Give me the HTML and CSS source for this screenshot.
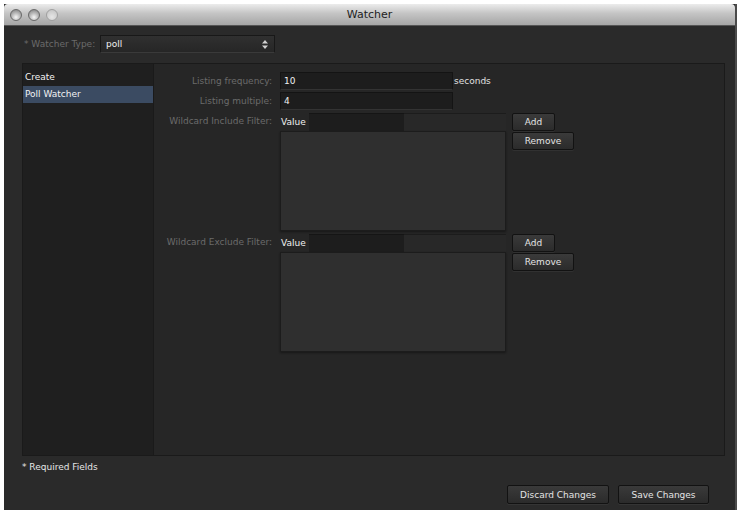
FILE: index.html
```html
<!DOCTYPE html>
<html>
<head>
<meta charset="utf-8">
<link rel="stylesheet" href="styles.css">
</head>
<body>
<div class="window">
  <div class="titlebar">
    <div class="lights"><span class="light"></span><span class="light"></span><span class="light off"></span></div>
    <div class="title">Watcher</div>
  </div>
  <div class="content">
    <div class="typerow">
      <span class="dim">* Watcher Type:</span>
      <div class="select"><span>poll</span><svg class="arrows" width="6" height="9" viewBox="0 0 6 9"><path d="M3 0 L6 3.5 H0 Z M3 9 L6 5.5 H0 Z" fill="#d0d0d0"/></svg></div>
    </div>
    <div class="panel">
      <div class="sidebar">
        <div class="item">Create</div>
        <div class="item selected">Poll Watcher</div>
      </div>
      <div class="main">
        <div class="form">
          <div class="lbl">Listing frequency:</div>
          <div class="ctl"><div class="input">10</div><span class="unit">seconds</span></div>
          <div></div>
          <div class="lbl">Listing multiple:</div>
          <div class="ctl"><div class="input">4</div></div>
          <div></div>

          <div class="lbl">Wildcard Include Filter:</div>
          <div class="valrow"><span class="vl">Value</span><div class="vinput"></div><div class="vstrip"></div></div>
          <div><button class="btn add">Add</button></div>
          <div></div>
          <div class="listbox"></div>
          <div><button class="btn rem">Remove</button></div>

          <div class="lbl">Wildcard Exclude Filter:</div>
          <div class="valrow"><span class="vl">Value</span><div class="vinput"></div><div class="vstrip"></div></div>
          <div><button class="btn add">Add</button></div>
          <div></div>
          <div class="listbox"></div>
          <div><button class="btn rem">Remove</button></div>
        </div>
      </div>
    </div>
    <div class="req">* Required Fields</div>
    <div class="actions">
      <button class="btn big discard">Discard Changes</button>
      <button class="btn big save">Save Changes</button>
    </div>
  </div>
</div>
</body>
</html>
```

FILE: styles.css
```css
html, body { margin: 0; padding: 0; background: #ffffff; }
body { font-family: "DejaVu Sans", sans-serif; font-size: 9px; color: #e2e2e2; }

.window {
  margin: 4px 0 0 4px;
  width: 733px;
  height: 506px;
  background: #2a2a2a;
  border-right: 2px solid #4a4a4a;
  box-sizing: border-box;
  display: flex;
  flex-direction: column;
}
.titlebar {
  height: 21px;
  flex: none;
  background: linear-gradient(#ececec, #c4c4c4 45%, #a6a6a6);
  border-bottom: 1px solid #555;
  display: flex;
  align-items: center;
  position: relative;
  border-radius: 4px 4px 0 0;
}
.lights { display: flex; gap: 6px; padding-left: 6px; position: relative; z-index: 1; }
.light {
  width: 12px; height: 12px; border-radius: 50%;
  background: radial-gradient(circle at 50% 72%, #f6f6f6 0, #c2c2c2 40%, #7a7a7a 100%);
  border: 1px solid #6a6a6a;
  box-sizing: border-box;
}
.light.off { border-color: #a0a0a0; background: radial-gradient(circle at 50% 70%, #e6e6e6, #c0c0c0); }
.title {
  position: absolute; left: 0; right: 0; text-align: center;
  font-size: 11px; color: #1e1e1e; top: 4px;
}

.content { flex: 1; display: flex; flex-direction: column; padding: 0 8px 0 18px; }
.typerow { display: flex; align-items: center; height: 18px; margin-top: 9px; }
.dim { color: #6a6a6a; }
.typerow .dim { width: 76px; padding-left: 2px; }
.select {
  width: 175px; height: 18px; box-sizing: border-box;
  background: linear-gradient(#303030, #262626);
  border: 1px solid #181818;
  border-bottom-color: #3a3a3a;
  display: flex; align-items: center; justify-content: space-between;
  padding: 0 6px 0 5px; color: #f0f0f0;
}
.arrows { display: block; }

.panel {
  margin-top: 10px;
  height: 391px;
  border: 1px solid #1a1a1a;
  display: flex;
  margin-right: 2px;
}
.sidebar { width: 131px; background: #1f1f1f; border-right: 1px solid #1a1a1a; padding-top: 5px; box-sizing: border-box; }
.item { height: 17px; line-height: 17px; padding-left: 2px; color: #f2f2f2; }
.selected { background: #3b4b62; }
.main { flex: 1; background: #262626; padding: 8px 0 0 0; }

.form {
  display: grid;
  grid-template-columns: 120px 226px auto;
  column-gap: 6px;
  row-gap: 2px;
  align-items: start;
}
.lbl { text-align: right; color: #6b6b6b; height: 18px; line-height: 18px; padding-right: 2px; }
.ctl { display: flex; align-items: center; }
.input {
  width: 173px; height: 18px; box-sizing: border-box; line-height: 17px;
  background: #1d1d1d; border: 1px solid #141414; border-bottom-color: #333;
  padding-left: 3px; color: #f0f0f0;
}
.unit { margin-left: 1px; color: #e0e0e0; }
.valrow { display: flex; height: 18px; align-items: stretch; margin-top: 1px; }
.vl { width: 28px; line-height: 18px; color: #f0f0f0; padding-left: 1px; }
.vinput { width: 95px; background: #1d1d1d; border-top: 1px solid #151515; }
.vstrip { flex: 1; background: #282828; border-top: 1px solid #1c1c1c; }
.listbox {
  width: 226px; height: 100px; box-sizing: border-box;
  background: #2f2f2f; border: 1px solid #1c1c1c;
  margin-top: -2px;
  box-shadow: 0 1px 2px rgba(0,0,0,.4);
}
.btn {
  font-family: "DejaVu Sans", sans-serif; font-size: 9px; color: #e4e4e4;
  background: linear-gradient(#3a3a3a, #2b2b2b);
  border: 1px solid #121212; border-radius: 2px;
  padding: 0; margin: 0;
  box-shadow: 0 1px 0 rgba(255,255,255,.05);
}
.add { width: 43px; height: 18px; margin-top: 1px; }
.rem { width: 62px; height: 18px; margin-top: -1px; }

.req { margin-top: 3px; height: 16px; line-height: 16px; color: #e6e6e6; }
.actions { display: flex; justify-content: flex-end; gap: 9px; margin-top: 10px; padding-right: 18px; }
.big { height: 19px; }
.discard { width: 102px; }
.save { width: 91px; }
```
